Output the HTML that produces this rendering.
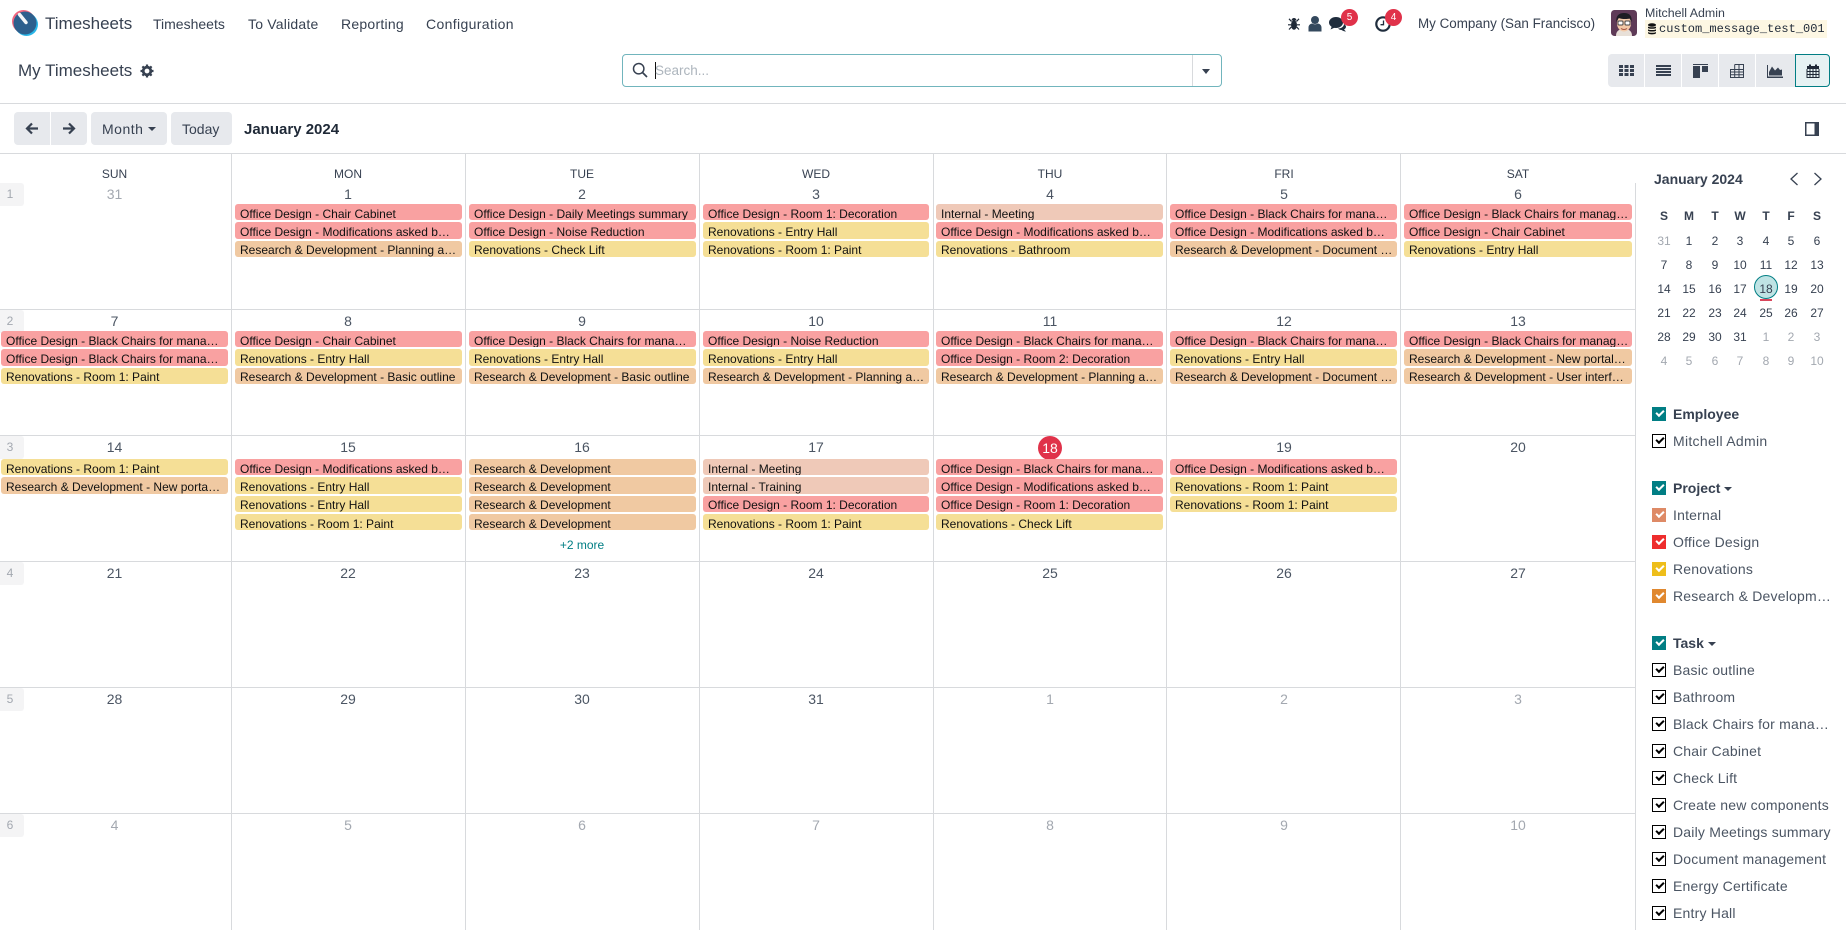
<!DOCTYPE html>
<html lang="en"><head><meta charset="utf-8"><title>My Timesheets</title>
<style>
html,body{margin:0;padding:0;background:#fff}
body{position:relative;width:1846px;height:930px;overflow:hidden;font-family:"Liberation Sans",sans-serif;font-size:14px;color:#374151}
.t{position:absolute;white-space:nowrap;line-height:20px}
.l{position:absolute;background:#d8dadd}
.btn{position:absolute;background:#e7e9ed;top:112px;height:33px}
svg{position:absolute;display:block}
.h{position:absolute;top:164px;height:20px;line-height:20px;font-size:12px;text-align:center;color:#374151}
.c0{left:1px;width:227px}.c1{left:235px;width:227px}.c2{left:469px;width:227px}.c3{left:703px;width:226px}.c4{left:936px;width:227px}.c5{left:1170px;width:227px}.c6{left:1404px;width:228px}
.n{position:absolute;height:20px;line-height:20px;text-align:center;font-size:14px;color:#4b5563}
.n0{left:0;width:229px}.n1{left:231px;width:234px}.n2{left:465px;width:234px}.n3{left:699px;width:234px}.n4{left:933px;width:234px}.n5{left:1167px;width:234px}.n6{left:1401px;width:234px}
.g{color:#a3a8b0}
.wk{position:absolute;left:0;width:24px;height:23px;line-height:23px;background:#f4f4f5;color:#a3a8b0;font-size:12px;text-align:center;border-radius:0 3px 3px 0;padding-right:4px;box-sizing:border-box}
.e{position:absolute;box-sizing:border-box;padding:0 1px 0 5px;border-radius:3px;font-size:12px;line-height:20px;color:#111;overflow:hidden;white-space:nowrap;text-overflow:ellipsis}
.s1{height:16px}.s2{height:17px}.s3{height:16px;line-height:18px}.s4{height:16px}
.R{background:#f9a1a1}.Y{background:#f5df96}.O{background:#f0c9a2}.I{background:#efc9b8}
.w1 .s1{top:204px}.w1 .s2{top:222px}.w1 .s3{top:241px}
.w2 .s1{top:331px}.w2 .s2{top:349px}.w2 .s3{top:368px}
.w3 .s1{top:459px}.w3 .s2{top:477px}.w3 .s3{top:496px}.w3 .s4{top:514px}
.d{position:absolute;width:26px;margin-left:-13px;text-align:center;font-size:12px;height:20px;line-height:20px;color:#374151}
.d.g{color:#a3a8b0}
.dh{font-weight:700}
.cb{position:absolute;left:1652px;width:14px;height:14px;box-sizing:border-box}
.cb.k{background:#fff;border:1px solid #000}
.cb::after{content:"";position:absolute;left:3.5px;top:2.5px;width:6px;height:3px;border-left:2px solid #fff;border-bottom:2px solid #fff;transform:rotate(-45deg)}
.cb.k::after{left:2.5px;top:1.5px;border-color:#000}
.f{position:absolute;left:1673px;white-space:nowrap;line-height:20px;font-size:14px;color:#4b5563;letter-spacing:.2px}
.fb{font-weight:700;color:#374151;letter-spacing:0}
.car{display:inline-block;width:0;height:0;border-left:4px solid transparent;border-right:4px solid transparent;border-top:4px solid #374151;vertical-align:middle;margin-left:4px}
</style></head><body>

<!-- navbar -->
<svg style="left:12px;top:10px" width="26" height="26" viewBox="0 0 26 26"><circle cx="11.500" cy="11.500" r="11.500" fill="#f0667f"/><circle cx="14.500" cy="14.500" r="11.500" fill="#29b6e8"/><circle cx="13" cy="13" r="11.500" fill="#2d5f8d"/><path d="M7.500 4.500L14 12.500" stroke="#f4f6f8" stroke-width="3.400" stroke-linecap="round"/></svg>
<div class="t" style="left:45px;top:13px;font-size:17px;line-height:22px">Timesheets</div>
<div class="t" style="left:153px;top:14px">Timesheets</div>
<div class="t" style="left:248px;top:14px;letter-spacing:.2px">To Validate</div>
<div class="t" style="left:341px;top:14px;letter-spacing:.25px">Reporting</div>
<div class="t" style="left:426px;top:14px;letter-spacing:.36px">Configuration</div>

<svg style="left:1288px;top:17px" width="12" height="13" viewBox="0 0 12 13" fill="#1f2937"><ellipse cx="6" cy="8" rx="3" ry="4.800"/><path d="M3.500 3.500a2.500 2.500 0 0 1 5 0z"/><path d="M1 1.800l2.500 2.700M11 1.800L8.500 4.500M0 7.800h3M12 7.800H9M1 12.500l2.300-2.500M11 12.500L8.700 10" stroke="#1f2937" stroke-width="1.200" fill="none"/></svg>
<svg style="left:1308px;top:15px" width="14" height="17" viewBox="0 0 14 17" fill="#34495e"><circle cx="7" cy="5" r="4"/><path d="M0.500 16.500V12.500C0.500 10 2.500 8.500 4.500 8.500C5.500 9.500 8.500 9.500 9.500 8.500C11.500 8.500 13.500 10 13.500 12.500V16.500Z"/></svg>
<svg style="left:1329px;top:16px" width="18" height="16" viewBox="0 0 18 16" fill="#1f2d3d"><ellipse cx="7" cy="6.500" rx="7" ry="5.500"/><path d="M3 10L1.500 13.500L7 11Z"/><path d="M9 12.500C13 12.500 15 10 15 8C16.500 9 17 10 17 10.800C17 12 16 13 15 13.500L17 15.500C15 15.500 13.500 14.500 12.500 14C11 14 10 13.500 9 12.500Z"/></svg>
<div style="position:absolute;left:1341px;top:9px;width:17px;height:17px;border-radius:50%;background:#e0324a;color:#fff;font-size:10px;line-height:17px;text-align:center">5</div>
<svg style="left:1375px;top:16px" width="16" height="16" viewBox="0 0 16 16"><circle cx="8" cy="8" r="6.700" fill="none" stroke="#1f2d3d" stroke-width="2.200"/><path d="M8.500 4.500V8.700H5.500" stroke="#1f2d3d" stroke-width="1.300" fill="none"/></svg>
<div style="position:absolute;left:1385px;top:9px;width:17px;height:17px;border-radius:50%;background:#e0324a;color:#fff;font-size:10px;line-height:17px;text-align:center">4</div>
<div class="t" style="left:1418px;top:14px;font-size:13.400px">My Company (San Francisco)</div>

<svg style="left:1611px;top:10px" width="26" height="26" viewBox="0 0 26 26"><rect width="26" height="26" rx="3.500" fill="#5e3a57"/><path d="M5 26C5 21 8 19 13 19C18 19 21 21 21 26Z" fill="#e8e0d8"/><ellipse cx="13" cy="13.500" rx="7" ry="8" fill="#f3c9a8"/><path d="M5.500 12C4.500 5 9 3 13 3C18 3 21.500 5.500 20.500 12L19 8.500C15 9.500 10 9 7.500 8Z" fill="#1d1d24"/><rect x="7" y="11" width="5" height="4" rx="1" fill="#fff" stroke="#444" stroke-width="1"/><rect x="14" y="11" width="5" height="4" rx="1" fill="#fff" stroke="#444" stroke-width="1"/><path d="M10 18.500Q13 20.500 16 18.500" stroke="#a5533f" fill="none" stroke-width="1"/></svg>
<div class="t" style="left:1645px;top:4px;font-size:12.400px;line-height:18px">Mitchell Admin</div>
<div style="position:absolute;left:1645px;top:20px;width:182px;height:18px;background:#fdf7e3"></div>
<svg style="left:1647px;top:23px" width="10" height="12" viewBox="0 0 10 12" fill="#111"><ellipse cx="5" cy="2" rx="4" ry="1.700"/><path d="M1 3.500C2 4.500 8 4.500 9 3.500V5C8 6 2 6 1 5ZM1 6.300C2 7.300 8 7.300 9 6.300V7.800C8 8.800 2 8.800 1 7.800ZM1 9C2 10 8 10 9 9V10.300C8 11.800 2 11.800 1 10.300Z"/></svg>
<div class="t" style="left:1659px;top:19px;font-family:'Liberation Mono',monospace;font-size:12px;color:#1f2937">custom_message_test_001</div>

<!-- control panel -->
<div class="t" style="left:18px;top:60px;font-size:17px;line-height:22px">My Timesheets</div>
<svg style="left:140px;top:64px" width="14" height="14" viewBox="0 0 14 14"><circle cx="7" cy="7" r="3.800" fill="none" stroke="#374151" stroke-width="2.800"/><path d="M7 .5V3M7 11v2.500M.5 7H3M11 7h2.500M2.400 2.400l1.800 1.800M9.800 9.800l1.800 1.800M2.400 11.600l1.800-1.800M9.800 4.200l1.800-1.800" stroke="#374151" stroke-width="2.200"/></svg>

<div style="position:absolute;left:622px;top:54px;width:600px;height:33px;box-sizing:border-box;border:1px solid #71b5bd;border-radius:4px;background:#fff"></div>
<div class="l" style="left:1192px;top:55px;width:1px;height:31px;background:#d8dadd"></div>
<svg style="left:632px;top:62px" width="16" height="16" viewBox="0 0 16 16"><circle cx="6.700" cy="6.700" r="5.200" fill="none" stroke="#374151" stroke-width="1.500"/><path d="M10.500 10.500L15 15" stroke="#374151" stroke-width="1.700"/></svg>
<div style="position:absolute;left:655px;top:62px;width:1px;height:17px;background:#111"></div>
<div class="t" style="left:655px;top:61px;color:#adb5bd;font-size:13.500px">Search...</div>
<div style="position:absolute;left:1202px;top:69px;width:0;height:0;border-left:4.500px solid transparent;border-right:4.500px solid transparent;border-top:5px solid #374151"></div>

<!-- view switch -->
<div style="position:absolute;left:1608px;top:54px;width:36px;height:33px;background:#e7e9ed;border-radius:4px 0 0 4px"></div>
<div style="position:absolute;left:1645px;top:54px;width:36px;height:33px;background:#e7e9ed"></div>
<div style="position:absolute;left:1682px;top:54px;width:36px;height:33px;background:#e7e9ed"></div>
<div style="position:absolute;left:1719px;top:54px;width:36px;height:33px;background:#e7e9ed"></div>
<div style="position:absolute;left:1756px;top:54px;width:39px;height:33px;background:#e7e9ed"></div>
<div style="position:absolute;left:1795px;top:54px;width:35px;height:33px;box-sizing:border-box;background:#e6f2f3;border:1px solid #017e84;border-radius:0 4px 4px 0"></div>
<svg style="left:1619px;top:65px" width="15" height="11" viewBox="0 0 15 11" fill="#374151"><path d="M0 0h4v3H0zM5.500 0h4v3h-4zM11 0h4v3h-4zM0 4h4v3H0zM5.500 4h4v3h-4zM11 4h4v3h-4zM0 8h4v3H0zM5.500 8h4v3h-4zM11 8h4v3h-4z"/></svg>
<svg style="left:1656px;top:65px" width="15" height="11" viewBox="0 0 15 11" fill="#374151"><path d="M0 0h15v2H0zM0 3h15v2H0zM0 6h15v2H0zM0 9h15v2H0z"/></svg>
<svg style="left:1693px;top:64px" width="15" height="14" viewBox="0 0 15 14" fill="#374151"><path d="M0 0h15v1H0zM0 2h7v12H0zM9 2h6v6H9z"/></svg>
<svg style="left:1730px;top:64px" width="14" height="14" viewBox="0 0 14 14" fill="none" stroke="#374151"><path d="M.5 5.500h13v8H.5zM.5 8h13M.5 10.800h13M4.700 5.500v8M9 .5v13M4.700 .5H13.500V13.500M4.700 .5v5"/></svg>
<svg style="left:1767px;top:65px" width="16" height="13" viewBox="0 0 16 13" fill="#374151"><path d="M0 0h1v11.500h15V13H0z"/><path d="M2 10.500V7L5 1.500L8 5.500L11 2.500L13 5L15 4.500V10.500Z"/></svg>
<svg style="left:1806px;top:64px" width="14" height="14" viewBox="0 0 14 14"><path d="M1 2h12v3H1z" fill="#1f2937"/><path d="M3 .5h2v3H3zM9 .5h2v3H9z" fill="#1f2937"/><path d="M1 5v8.500h12V5M1 7.500h12M1 10.500h12M4 5v8.500M7 5v8.500M10 5v8.500" fill="none" stroke="#1f2937"/></svg>
<div class="l" style="left:0;top:103px;width:1846px;height:1px"></div>

<!-- toolbar -->
<div class="btn" style="left:14px;width:36px;border-radius:4px 0 0 4px"></div>
<div class="btn" style="left:51px;width:36px;border-radius:0 4px 4px 0"></div>
<svg style="left:25px;top:122px" width="14" height="13" viewBox="0 0 14 13"><path d="M13 6.500H2.500M7 1.500L2 6.500L7 11.500" fill="none" stroke="#374151" stroke-width="2.200"/></svg>
<svg style="left:62px;top:122px" width="14" height="13" viewBox="0 0 14 13"><path d="M1 6.500H11.500M7 1.500L12 6.500L7 11.500" fill="none" stroke="#374151" stroke-width="2.200"/></svg>
<div class="btn" style="left:91px;width:76px;border-radius:4px"></div>
<div class="t" style="left:102px;top:119px;font-size:14px;letter-spacing:.5px">Month</div>
<div style="position:absolute;left:148px;top:127px;width:0;height:0;border-left:4px solid transparent;border-right:4px solid transparent;border-top:4px solid #374151"></div>
<div class="btn" style="left:171px;width:61px;border-radius:4px"></div>
<div class="t" style="left:182px;top:119px">Today</div>
<div class="t" style="left:244px;top:120px;font-size:15px;font-weight:700;color:#1f2937">January 2024</div>
<svg style="left:1805px;top:122px" width="14" height="14" viewBox="0 0 14 14"><rect x=".75" y=".75" width="12.500" height="12.500" fill="#fff" stroke="#374151" stroke-width="1.500"/><rect x="9.500" y="0" width="4.500" height="14" fill="#374151"/></svg>
<div class="l" style="left:0;top:153px;width:1846px;height:1px"></div>

<!-- grid lines -->
<div class="l" style="left:231px;top:154px;width:1px;height:776px"></div>
<div class="l" style="left:465px;top:154px;width:1px;height:776px"></div>
<div class="l" style="left:699px;top:154px;width:1px;height:776px"></div>
<div class="l" style="left:933px;top:154px;width:1px;height:776px"></div>
<div class="l" style="left:1166px;top:154px;width:1px;height:776px"></div>
<div class="l" style="left:1400px;top:154px;width:1px;height:776px"></div>
<div class="l" style="left:1635px;top:183px;width:1px;height:747px"></div>
<div class="l" style="left:0;top:309px;width:1635px;height:1px"></div>
<div class="l" style="left:0;top:435px;width:1635px;height:1px"></div>
<div class="l" style="left:0;top:561px;width:1635px;height:1px"></div>
<div class="l" style="left:0;top:687px;width:1635px;height:1px"></div>
<div class="l" style="left:0;top:813px;width:1635px;height:1px"></div>

<!-- headers -->
<div class="h n0">SUN</div><div class="h n1">MON</div><div class="h n2">TUE</div><div class="h n3">WED</div><div class="h n4">THU</div><div class="h n5">FRI</div><div class="h n6">SAT</div>

<div class="wk" style="top:183px">1</div><div class="wk" style="top:310px">2</div><div class="wk" style="top:436px">3</div><div class="wk" style="top:562px">4</div><div class="wk" style="top:688px">5</div><div class="wk" style="top:814px">6</div>

<!-- day numbers -->
<div class="n n0 g" style="top:184px">31</div><div class="n n1" style="top:184px">1</div><div class="n n2" style="top:184px">2</div><div class="n n3" style="top:184px">3</div><div class="n n4" style="top:184px">4</div><div class="n n5" style="top:184px">5</div><div class="n n6" style="top:184px">6</div>
<div class="n n0" style="top:311px">7</div><div class="n n1" style="top:311px">8</div><div class="n n2" style="top:311px">9</div><div class="n n3" style="top:311px">10</div><div class="n n4" style="top:311px">11</div><div class="n n5" style="top:311px">12</div><div class="n n6" style="top:311px">13</div>
<div style="position:absolute;left:1038px;top:436px;width:24px;height:24px;border-radius:50%;background:#e0324a"></div>
<div class="n n0" style="top:437px">14</div><div class="n n1" style="top:437px">15</div><div class="n n2" style="top:437px">16</div><div class="n n3" style="top:437px">17</div><div class="n n4" style="top:438px;color:#fff">18</div><div class="n n5" style="top:437px">19</div><div class="n n6" style="top:437px">20</div>
<div class="n n0" style="top:563px">21</div><div class="n n1" style="top:563px">22</div><div class="n n2" style="top:563px">23</div><div class="n n3" style="top:563px">24</div><div class="n n4" style="top:563px">25</div><div class="n n5" style="top:563px">26</div><div class="n n6" style="top:563px">27</div>
<div class="n n0" style="top:689px">28</div><div class="n n1" style="top:689px">29</div><div class="n n2" style="top:689px">30</div><div class="n n3" style="top:689px">31</div><div class="n n4 g" style="top:689px">1</div><div class="n n5 g" style="top:689px">2</div><div class="n n6 g" style="top:689px">3</div>
<div class="n n0 g" style="top:815px">4</div><div class="n n1 g" style="top:815px">5</div><div class="n n2 g" style="top:815px">6</div><div class="n n3 g" style="top:815px">7</div><div class="n n4 g" style="top:815px">8</div><div class="n n5 g" style="top:815px">9</div><div class="n n6 g" style="top:815px">10</div>

<!-- events -->
<div class="w1">
<div class="e c1 s1 R">Office Design - Chair Cabinet</div><div class="e c1 s2 R">Office Design - Modifications asked b…</div><div class="e c1 s3 O">Research &amp; Development - Planning a…</div>
<div class="e c2 s1 R">Office Design - Daily Meetings summary</div><div class="e c2 s2 R">Office Design - Noise Reduction</div><div class="e c2 s3 Y">Renovations - Check Lift</div>
<div class="e c3 s1 R">Office Design - Room 1: Decoration</div><div class="e c3 s2 Y">Renovations - Entry Hall</div><div class="e c3 s3 Y">Renovations - Room 1: Paint</div>
<div class="e c4 s1 I">Internal - Meeting</div><div class="e c4 s2 R">Office Design - Modifications asked b…</div><div class="e c4 s3 Y">Renovations - Bathroom</div>
<div class="e c5 s1 R">Office Design - Black Chairs for mana…</div><div class="e c5 s2 R">Office Design - Modifications asked b…</div><div class="e c5 s3 O">Research &amp; Development - Document …</div>
<div class="e c6 s1 R">Office Design - Black Chairs for manag…</div><div class="e c6 s2 R">Office Design - Chair Cabinet</div><div class="e c6 s3 Y">Renovations - Entry Hall</div>
</div>
<div class="w2">
<div class="e c0 s1 R">Office Design - Black Chairs for mana…</div><div class="e c0 s2 R">Office Design - Black Chairs for mana…</div><div class="e c0 s3 Y">Renovations - Room 1: Paint</div>
<div class="e c1 s1 R">Office Design - Chair Cabinet</div><div class="e c1 s2 Y">Renovations - Entry Hall</div><div class="e c1 s3 O">Research &amp; Development - Basic outline</div>
<div class="e c2 s1 R">Office Design - Black Chairs for mana…</div><div class="e c2 s2 Y">Renovations - Entry Hall</div><div class="e c2 s3 O">Research &amp; Development - Basic outline</div>
<div class="e c3 s1 R">Office Design - Noise Reduction</div><div class="e c3 s2 Y">Renovations - Entry Hall</div><div class="e c3 s3 O">Research &amp; Development - Planning a…</div>
<div class="e c4 s1 R">Office Design - Black Chairs for mana…</div><div class="e c4 s2 R">Office Design - Room 2: Decoration</div><div class="e c4 s3 O">Research &amp; Development - Planning a…</div>
<div class="e c5 s1 R">Office Design - Black Chairs for mana…</div><div class="e c5 s2 Y">Renovations - Entry Hall</div><div class="e c5 s3 O">Research &amp; Development - Document …</div>
<div class="e c6 s1 R">Office Design - Black Chairs for manag…</div><div class="e c6 s2 O">Research &amp; Development - New portal…</div><div class="e c6 s3 O">Research &amp; Development - User interf…</div>
</div>
<div class="w3">
<div class="e c0 s1 Y">Renovations - Room 1: Paint</div><div class="e c0 s2 O">Research &amp; Development - New porta…</div>
<div class="e c1 s1 R">Office Design - Modifications asked b…</div><div class="e c1 s2 Y">Renovations - Entry Hall</div><div class="e c1 s3 Y">Renovations - Entry Hall</div><div class="e c1 s4 Y">Renovations - Room 1: Paint</div>
<div class="e c2 s1 O">Research &amp; Development</div><div class="e c2 s2 O">Research &amp; Development</div><div class="e c2 s3 O">Research &amp; Development</div><div class="e c2 s4 O">Research &amp; Development</div>
<div class="e c3 s1 I">Internal - Meeting</div><div class="e c3 s2 I">Internal - Training</div><div class="e c3 s3 R">Office Design - Room 1: Decoration</div><div class="e c3 s4 Y">Renovations - Room 1: Paint</div>
<div class="e c4 s1 R">Office Design - Black Chairs for mana…</div><div class="e c4 s2 R">Office Design - Modifications asked b…</div><div class="e c4 s3 R">Office Design - Room 1: Decoration</div><div class="e c4 s4 Y">Renovations - Check Lift</div>
<div class="e c5 s1 R">Office Design - Modifications asked b…</div><div class="e c5 s2 Y">Renovations - Room 1: Paint</div><div class="e c5 s3 Y">Renovations - Room 1: Paint</div>
</div>
<div class="t" style="left:465px;width:234px;text-align:center;top:535px;font-size:12px;color:#017e84">+2 more</div>

<!-- sidebar -->
<div class="t" style="left:1654px;top:169px;font-weight:700;font-size:14px">January 2024</div>
<svg style="left:1788px;top:172px" width="12" height="14" viewBox="0 0 12 14"><path d="M9.500 1L3 7L9.500 13" fill="none" stroke="#374151" stroke-width="1.300"/></svg>
<svg style="left:1812px;top:172px" width="12" height="14" viewBox="0 0 12 14"><path d="M2.500 1L9 7L2.500 13" fill="none" stroke="#374151" stroke-width="1.300"/></svg>

<div class="d dh" style="left:1664px;top:206px">S</div><div class="d dh" style="left:1689px;top:206px">M</div><div class="d dh" style="left:1715px;top:206px">T</div><div class="d dh" style="left:1740px;top:206px">W</div><div class="d dh" style="left:1766px;top:206px">T</div><div class="d dh" style="left:1791px;top:206px">F</div><div class="d dh" style="left:1817px;top:206px">S</div>
<div class="d g" style="left:1664px;top:231px">31</div><div class="d" style="left:1689px;top:231px">1</div><div class="d" style="left:1715px;top:231px">2</div><div class="d" style="left:1740px;top:231px">3</div><div class="d" style="left:1766px;top:231px">4</div><div class="d" style="left:1791px;top:231px">5</div><div class="d" style="left:1817px;top:231px">6</div>
<div class="d" style="left:1664px;top:255px">7</div><div class="d" style="left:1689px;top:255px">8</div><div class="d" style="left:1715px;top:255px">9</div><div class="d" style="left:1740px;top:255px">10</div><div class="d" style="left:1766px;top:255px">11</div><div class="d" style="left:1791px;top:255px">12</div><div class="d" style="left:1817px;top:255px">13</div>
<div style="position:absolute;left:1754px;top:275px;width:24px;height:24px;box-sizing:border-box;border-radius:50%;background:#bfe3e4;border:1px solid #017e84"></div>
<div style="position:absolute;left:1760px;top:299px;width:12px;height:2px;background:#d9475c"></div>
<div class="d" style="left:1664px;top:279px">14</div><div class="d" style="left:1689px;top:279px">15</div><div class="d" style="left:1715px;top:279px">16</div><div class="d" style="left:1740px;top:279px">17</div><div class="d" style="left:1766px;top:279px">18</div><div class="d" style="left:1791px;top:279px">19</div><div class="d" style="left:1817px;top:279px">20</div>
<div class="d" style="left:1664px;top:303px">21</div><div class="d" style="left:1689px;top:303px">22</div><div class="d" style="left:1715px;top:303px">23</div><div class="d" style="left:1740px;top:303px">24</div><div class="d" style="left:1766px;top:303px">25</div><div class="d" style="left:1791px;top:303px">26</div><div class="d" style="left:1817px;top:303px">27</div>
<div class="d" style="left:1664px;top:327px">28</div><div class="d" style="left:1689px;top:327px">29</div><div class="d" style="left:1715px;top:327px">30</div><div class="d" style="left:1740px;top:327px">31</div><div class="d g" style="left:1766px;top:327px">1</div><div class="d g" style="left:1791px;top:327px">2</div><div class="d g" style="left:1817px;top:327px">3</div>
<div class="d g" style="left:1664px;top:351px">4</div><div class="d g" style="left:1689px;top:351px">5</div><div class="d g" style="left:1715px;top:351px">6</div><div class="d g" style="left:1740px;top:351px">7</div><div class="d g" style="left:1766px;top:351px">8</div><div class="d g" style="left:1791px;top:351px">9</div><div class="d g" style="left:1817px;top:351px">10</div>

<div class="cb" style="top:407px;background:#017e84"></div><div class="f fb" style="top:404px">Employee</div>
<div class="cb k" style="top:434px"></div><div class="f" style="top:431px;letter-spacing:.3px">Mitchell Admin</div>
<div class="cb" style="top:481px;background:#017e84"></div><div class="f fb" style="top:478px">Project<span class="car"></span></div>
<div class="cb" style="top:508px;background:#de8a66"></div><div class="f" style="top:505px">Internal</div>
<div class="cb" style="top:535px;background:#ee2d2d"></div><div class="f" style="top:532px">Office Design</div>
<div class="cb" style="top:562px;background:#eebe1a"></div><div class="f" style="top:559px">Renovations</div>
<div class="cb" style="top:589px;background:#e0882f"></div><div class="f" style="top:586px">Research &amp; Developm…</div>
<div class="cb" style="top:636px;background:#017e84"></div><div class="f fb" style="top:633px">Task<span class="car"></span></div>
<div class="cb k" style="top:663px"></div><div class="f" style="top:660px">Basic outline</div>
<div class="cb k" style="top:690px"></div><div class="f" style="top:687px">Bathroom</div>
<div class="cb k" style="top:717px"></div><div class="f" style="top:714px">Black Chairs for mana…</div>
<div class="cb k" style="top:744px"></div><div class="f" style="top:741px">Chair Cabinet</div>
<div class="cb k" style="top:771px"></div><div class="f" style="top:768px">Check Lift</div>
<div class="cb k" style="top:798px"></div><div class="f" style="top:795px">Create new components</div>
<div class="cb k" style="top:825px"></div><div class="f" style="top:822px">Daily Meetings summary</div>
<div class="cb k" style="top:852px"></div><div class="f" style="top:849px">Document management</div>
<div class="cb k" style="top:879px"></div><div class="f" style="top:876px">Energy Certificate</div>
<div class="cb k" style="top:906px"></div><div class="f" style="top:903px">Entry Hall</div>
</body></html>
